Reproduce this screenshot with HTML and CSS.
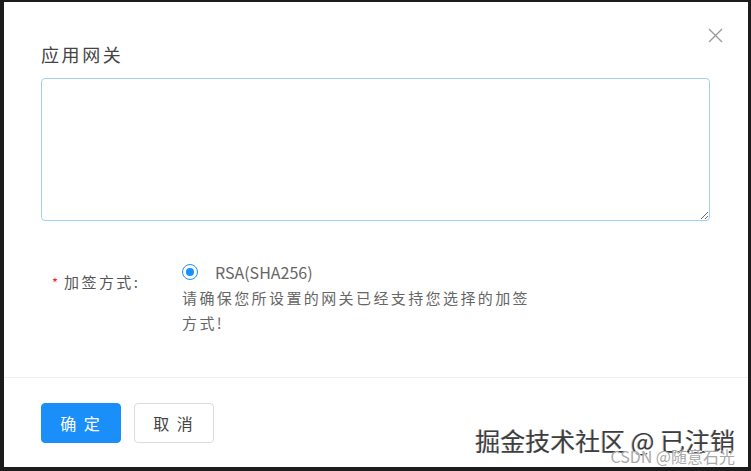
FILE: index.html
```html
<!DOCTYPE html>
<html lang="zh-CN">
<head>
<meta charset="utf-8">
<title>应用网关</title>
<link rel="stylesheet" href="styles.css">
</head>
<body>
<div class="dialog">
  <button class="close" aria-label="关闭">
    <svg width="15" height="15" viewBox="0 0 15 15"><path d="M1 1L14 14M14 1L1 14" stroke="#9a9a9a" stroke-width="1.4" fill="none"/></svg>
  </button>
  <div class="dialog-body">
    <div class="title">应用网关</div>
    <textarea class="gateway"></textarea>
    <div class="form-row">
      <div class="label"><span class="req">*</span>加签方式:</div>
      <div class="control">
        <div class="radio-line">
          <span class="radio"><span class="dot"></span></span>
          <span class="radio-text">RSA(SHA256)</span>
        </div>
        <div class="help">请确保您所设置的网关已经支持您选择的加签方式!</div>
      </div>
    </div>
  </div>
  <div class="footer">
    <button class="btn primary">确 定</button>
    <button class="btn">取 消</button>
  </div>
  <div class="watermark">
    <div class="wm-big">掘金技术社区 @ 已注销</div>
    <div class="wm-small">CSDN @随意石光</div>
  </div>
</div>
</body>
</html>
```

FILE: styles.css
```css
html, body {
  margin: 0;
  padding: 0;
}
body {
  background: #1c1c1c;
  width: 751px;
  height: 471px;
  box-sizing: border-box;
  padding: 2px 3px 4px 4px;
  font-family: "Noto Sans CJK SC", "Noto Sans", sans-serif;
  overflow: hidden;
}
.dialog {
  position: relative;
  background: #fff;
  height: 465px;
  display: flex;
  flex-direction: column;
}
.close {
  position: absolute;
  top: 26px;
  right: 25px;
  width: 15px;
  height: 15px;
  padding: 0;
  border: 0;
  background: transparent;
  line-height: 0;
}
.dialog-body {
  flex: 1;
  padding: 39px 38px 0 37px;
}
.title {
  font-size: 18px;
  line-height: 27px;
  letter-spacing: 2.6px;
  color: #444;
}
.gateway {
  display: block;
  box-sizing: border-box;
  width: 100%;
  height: 143px;
  margin-top: 10px;
  border: 1px solid #9fd0f2;
  border-radius: 4px;
  outline: none;
  resize: vertical;
  font-family: inherit;
}
.form-row {
  display: flex;
  margin-top: 40px;
}
.label {
  width: 130px;
  padding-left: 11px;
  padding-top: 10px;
  font-size: 15px;
  line-height: 22px;
  letter-spacing: 2.4px;
  color: #555;
}
.req {
  color: #f5222d;
  font-size: 13px;
  margin-right: 6px;
  letter-spacing: 0;
}
.control {
  width: 360px;
}
.radio-line {
  display: flex;
  align-items: center;
  height: 22px;
}
.radio {
  box-sizing: border-box;
  width: 16px;
  height: 16px;
  border: 1px solid #1890ff;
  border-radius: 50%;
  display: flex;
  align-items: center;
  justify-content: center;
}
.dot {
  width: 8px;
  height: 8px;
  border-radius: 50%;
  background: #1890ff;
}
.radio-text {
  margin-left: 17px;
  font-size: 16px;
  color: #666;
}
.help {
  margin-top: 2px;
  font-size: 15px;
  line-height: 25px;
  letter-spacing: 2.4px;
  color: #666;
}
.footer {
  box-sizing: border-box;
  height: 90px;
  border-top: 1px solid #efefef;
  padding: 25px 0 0 37px;
  display: flex;
  gap: 13px;
  align-items: flex-start;
}
.btn {
  box-sizing: border-box;
  width: 80px;
  height: 40px;
  border: 1px solid #dcdcdc;
  border-radius: 4px;
  background: #fff;
  color: #444;
  font-family: inherit;
  font-size: 16px;
  letter-spacing: 2px;
  padding: 0;
}
.btn.primary {
  background: #1b8ff9;
  border-color: #1b8ff9;
  color: #fff;
}
.watermark {
  position: absolute;
  right: 13px;
  top: 426px;
  text-align: right;
}
.wm-big {
  font-size: 25px;
  line-height: 25px;
  color: #3d3d3d;
  text-shadow: 1px 1px 0 #fff, -1px 0 0 #cfcfcf;
  white-space: nowrap;
}
.wm-small {
  margin-top: -5px;
  font-size: 16px;
  line-height: 16px;
  color: #a8a8a8;
  text-shadow: 1px 1px 0 #fff;
  white-space: nowrap;
}
```
